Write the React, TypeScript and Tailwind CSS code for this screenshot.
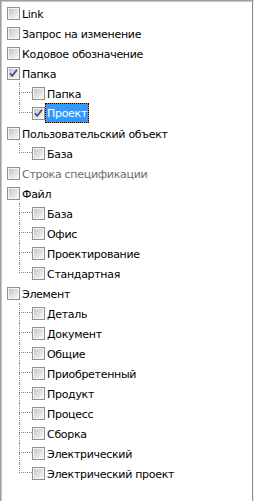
import React from "react";

type Node = { label: string; checked?: boolean; selected?: boolean; disabled?: boolean; children?: Node[] };

const data: Node[] = [
  { label: "Link" },
  { label: "Запрос на изменение" },
  { label: "Кодовое обозначение" },
  {
    label: "Папка",
    checked: true,
    children: [{ label: "Папка" }, { label: "Проект", checked: true, selected: true }],
  },
  { label: "Пользовательский объект", children: [{ label: "База" }] },
  { label: "Строка спецификации", disabled: true },
  {
    label: "Файл",
    children: [{ label: "База" }, { label: "Офис" }, { label: "Проектирование" }, { label: "Стандартная" }],
  },
  {
    label: "Элемент",
    children: [
      { label: "Деталь" },
      { label: "Документ" },
      { label: "Общие" },
      { label: "Приобретенный" },
      { label: "Продукт" },
      { label: "Процесс" },
      { label: "Сборка" },
      { label: "Электрический" },
      { label: "Электрический проект" },
    ],
  },
];

function Check({ checked, id }: { checked?: boolean; id: string }) {
  return (
    <svg width="13" height="13" viewBox="0 0 13 13" className="mt-[4px] shrink-0 block">
      <defs>
        <linearGradient id={id} x1="0" y1="0" x2="1" y2="1">
          <stop offset="0" stopColor="#c6c6c6" />
          <stop offset="1" stopColor="#f7f7f7" />
        </linearGradient>
      </defs>
      <rect x="0.5" y="0.5" width="12" height="12" fill="#f4f4f4" stroke="#8e8f8f" />
      <rect x="2" y="2" width="9" height="9" fill={`url(#${id})`} />
      {checked && (
        <path d="M3 6.2 L5.2 8.8 L10 2.8" fill="none" stroke="#3b4f91" strokeWidth="1.7" strokeLinejoin="miter" />
      )}
    </svg>
  );
}

function Label({ node }: { node: Node }) {
  if (node.selected) {
    return (
      <span className="h-[20px] bg-[#d8791f] border border-dotted border-black flex">
        <span className="bg-[#3399ff] text-white px-[1px] pt-[2px] leading-[16px] whitespace-nowrap">{node.label}</span>
      </span>
    );
  }
  return (
    <span
      className={`h-[20px] px-[2px] pt-[3px] leading-[17px] whitespace-nowrap ${
        node.disabled ? "text-[#6d6d6d]" : "text-black"
      }`}
    >
      {node.label}
    </span>
  );
}

export default function App() {
  let k = 0;
  return (
    <div
      className="w-[254px] h-[501px] overflow-hidden bg-white border-l border-t border-r border-l-[#a0a0a0] border-t-[#a0a0a0] border-r-[#f0f0f0] text-[11px] tracking-[-0.3px]"
      style={{ fontFamily: '"DejaVu Sans", sans-serif' }}
    >
      <div className="h-full border-l border-t border-r border-l-[#c4c4c4] border-t-[#c4c4c4] border-r-[#8a8a8a] pt-[1px] pl-[5px]">
        {data.map((n, i) => (
          <div key={i}>
            <div className="flex h-[20px]">
              <Check checked={n.checked} id={`g${k++}`} />
              <Label node={n} />
            </div>
            {n.children?.map((c, j) => {
              const last = j === n.children!.length - 1;
              return (
                <div key={j} className="flex h-[20px]">
                  <div className="w-[12px] shrink-0" />
                  <div className="w-[13px] shrink-0 flex flex-col">
                    <div className="h-[10px] border-l border-b border-dotted border-[#8a8a8a]" />
                    {!last && <div className="flex-1 border-l border-dotted border-[#8a8a8a]" />}
                  </div>
                  <Check checked={c.checked} id={`g${k++}`} />
                  <Label node={c} />
                </div>
              );
            })}
          </div>
        ))}
      </div>
    </div>
  );
}
